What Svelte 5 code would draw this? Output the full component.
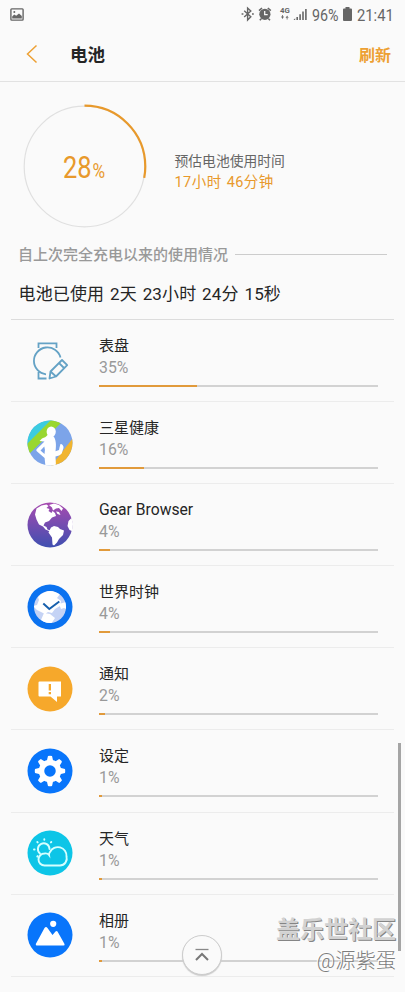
<script>
  const apps = [
    { icon: 'watch', name: '表盘', percent: 35 },
    { icon: 'health', name: '三星健康', percent: 16 },
    { icon: 'browser', name: 'Gear Browser', percent: 4 },
    { icon: 'clock', name: '世界时钟', percent: 4 },
    { icon: 'notice', name: '通知', percent: 2 },
    { icon: 'settings', name: '设定', percent: 1 },
    { icon: 'weather', name: '天气', percent: 1 },
    { icon: 'gallery', name: '相册', percent: 1 },
  ]

  const level = 28
  const teeth = [0, 45, 90, 135, 180, 225, 270, 315]
</script>

<div class="screen">
  <div class="status">
    <svg class="photo" width="14" height="13" viewBox="0 0 14 13">
      <rect x=".9" y=".9" width="12.2" height="11.2" rx=".8" fill="none" stroke="#666" stroke-width="1.4" />
      <path d="M2.200 10V8.500l2-2 2 1.300L9 5.500l2.800 2.500v2.500H2.200z" fill="#666" />
      <circle cx="4.300" cy="4" r="1" fill="#666" />
    </svg>
    <svg class="signals" width="68" height="16" viewBox="0 0 68 16">
      <g fill="none" stroke="#666" stroke-width="1.4">
        <path d="M3.2 4.8l6.6 6L6.6 14V2l3.200 3-6.600 6" />
        <path d="M.6 8h1.8M11 8h1.8" />
      </g>
      <circle cx="23.9" cy="8.3" r="5.6" fill="#666" />
      <path d="M18 4.600l3-2.600M29.800 4.600l-3-2.600M20.300 12.800l-1.500 1.500M27.500 12.800l1.500 1.500" stroke="#666" stroke-width="1.600" />
      <path d="M23.700 5v3.600h3" fill="none" stroke="#fafafa" stroke-width="1.300" />
      <text x="39" y="6.800">4G</text>
      <path d="M40 10.500h3L41.500 13zM44.600 12h3L46.100 9.500zM41.100 9h.8v2h-.8zM45.700 11.500h.8v2h-.8z" fill="#666" />
      <path d="M52.500 14h1.700v-1.700zM55.400 14v-3h1.600v3zM58.300 14V8.300h1.600V14zM61.200 14V5.600h1.600V14zM64.100 14V3h1.600v11z" fill="#666" />
    </svg>
    <span class="charge">96%</span>
    <svg class="cell" width="9" height="14" viewBox="0 0 9 14">
      <path d="M2.500 0h4v1.500H8q1 0 1 1V13q0 1-1 1H1q-1 0-1-1V2.500q0-1 1-1h1.500z" fill="#666" />
    </svg>
    <span class="time">21:41</span>
  </div>

  <header>
    <svg class="back" width="12" height="20" viewBox="0 0 12 20">
      <path d="M10.500 1.500L1.500 10l9 8.500" fill="none" stroke="#eda033" stroke-width="1.500" />
    </svg>
    <h1>电池</h1>
    <button type="button">刷新</button>
  </header>

  <section class="summary">
    <div class="gauge">
      <svg width="126" height="126" viewBox="0 0 126 126">
        <circle cx="63.500" cy="62.500" r="60.300" fill="none" stroke="#e0e0e0" stroke-width="1.200" />
        <circle
          cx="63.500" cy="62.500" r="60.800" fill="none" stroke="#e8992b" stroke-width="2.200"
          pathLength="100" stroke-dasharray="{level} 100" transform="rotate(-90 63.500 62.500)"
        />
      </svg>
      <div class="level"><b>{level}</b><small>%</small></div>
    </div>
    <div class="estimate">
      <p>预估电池使用时间</p>
      <strong>17小时 46分钟</strong>
    </div>
  </section>

  <h2><span>自上次完全充电以来的使用情况</span></h2>
  <p class="used">电池已使用 2天 23小时 24分 15秒</p>

  <ul>
    {#each apps as app}
      <li>
        <svg class="icon" width="46" height="46" viewBox="0 0 46 46">
          {#if app.icon === 'watch'}
            <g fill="none" stroke="#64a2c5" stroke-width="1.800">
              <path d="M11.500 10V5.300h18V10M33.500 19.500A13.500 13.500 0 1 0 19 36.300M11.500 34v6.500h8" />
              <path d="M22.500 40.500l1-7L35 22l5.200 5.200L29 38.500zM32 25l5 5M23.500 33.500L29 38.500" stroke-linejoin="round" />
            </g>
          {:else if app.icon === 'health'}
            <clipPath id="health-disc"><circle cx="23" cy="23" r="22.500" /></clipPath>
            <g clip-path="url(#health-disc)">
              <path d="M0 0h46v46H0z" fill="#7ca4e9" />
              <path d="M0 0h28L0 27z" fill="#3bcce0" />
              <path d="M25-1h10v3L2 34l-4-8z" fill="#99d730" />
              <path d="M46 18v28H24z" fill="#f1b52f" />
              <ellipse cx="24.200" cy="11.700" rx="4.600" ry="5.200" fill="#fff" />
              <path d="M20.500 15c-1.500 2-3 2.500-5.500 3.500l-2.500 2.500 5 .5L9.800 29c-.8 1-.5 1.800.3 2.500l7.500 6.500.8 8H29l-.5-9.500c2.500-.5 5-1.500 6.200-3l1.800-5.500c.4-2-1.500-4.200-3-4l-1 3.500-.5 2.500-3.500 1.300C29.500 25 29 18.500 26 16z" fill="#fff" />
              <path d="M17.300 26.500l-3.800 4 4 3.500q1-4-.2-7.500z" fill="#7ca4e9" />
            </g>
          {:else if app.icon === 'browser'}
            <linearGradient id="globe-fill" x1="0" y1="0" x2="0" y2="1">
              <stop offset="0" stop-color="#a84bb0" />
              <stop offset="1" stop-color="#3f4fb0" />
            </linearGradient>
            <circle cx="23" cy="23" r="22.500" fill="url(#globe-fill)" />
            <path d="M9.500 6.500l5-3 5-1 2 1.500-2 2 3 1-1 2 3 2 1-2 2.500 2 1 3-4 1.500-3 3.500-4 1.500-1.500 3 3 1.500 1 2.500 3 1-1 .8-4-1.800-2.500-3-4-2-2.500-5-1.500-5z" fill="#fff" />
            <path d="M22 3l5-1.500 5 1.500 4 3.500-1.500 2.500-2.500-3-3 .5-3 2-1-3zM29 9.500l3 .5 1.500 3-3-1zM24 25.500l3-1.500 4 1 2 2 4 1.500-1 4.500-4 4-2 3.500-3 3-1.500-1-.5-7-3.500-5zM44.500 16l-3 3-1 5 2 4 2.500 1 1-7z" fill="#fff" />
          {:else if app.icon === 'clock'}
            <circle cx="23" cy="23" r="22.500" fill="#0b72f0" />
            <clipPath id="clock-face"><circle cx="23" cy="23" r="16" /></clipPath>
            <g clip-path="url(#clock-face)">
              <path d="M7 7h32v32H7z" fill="#c5d3f5" />
              <path d="M14 10l9-4 10 4-3 4 4 3-1 5-5 3-3 4-4-1-3 2-8-4-4-4 4-1 2-5-1-3zM17 29l6 1 5 4-4 6h-7l-3-4zM32 20l7-2v7l-2-1-3 1z" fill="#fff" />
            </g>
            <path d="M16.300 19.500l6 5.500 10-7.500" fill="none" stroke="#1760ad" stroke-width="2" />
          {:else if app.icon === 'notice'}
            <circle cx="23" cy="23" r="22.500" fill="#f6a82b" />
            <path d="M12.500 15.500H34V30.500h-4V36l-6.500-5.500h-11q-1 0-1-1v-13q0-1 1-1z" fill="#fff" />
            <path d="M21.700 18h2.300v6.500h-2.300zM21.700 26h2.300v2.300h-2.300z" fill="#f6a82b" />
          {:else if app.icon === 'settings'}
            <circle cx="23" cy="23" r="22.500" fill="#0875fb" />
            {#each teeth as angle}
              <path d="M19.800 13l1.200-5q2-.5 4 0l1.200 5z" fill="#fff" transform="rotate({angle} 23 23)" />
            {/each}
            <circle cx="23" cy="23" r="8.500" fill="none" stroke="#fff" stroke-width="5.500" />
          {:else if app.icon === 'weather'}
            <circle cx="23" cy="23" r="22.500" fill="#0dc5e7" />
            <g fill="none" stroke="#d5ffff" stroke-width="1.900" stroke-linecap="round">
              <path d="M13 23.500a5.800 5.800 0 1 1 9.500-4.500" />
              <path d="M17.500 35.500h15.500a7 7 0 0 0 6.500-9 8.700 8.700 0 0 0-16.500-4.500q-1.200 1.500-1 3-1.500-2-4.500-1.500a6 6 0 0 0 0 12z" />
              <path d="M17.300 9.200v.6M10.300 12l.4.4M24.300 12l-.4.400M7 19.500h.6M10.300 26.500l.4-.4" />
            </g>
          {:else}
            <circle cx="23" cy="23" r="22.500" fill="#0875fb" />
            <path d="M8.800 32l8.700-16q1.500-2 3 0l5 7 3-3.500q1-1 2 0L37.500 32q.5 1.500-1 1.500H10q-1.500 0-1.200-1.500z" fill="#fff" />
            <circle cx="26.200" cy="11.800" r="3.100" fill="#fff" />
          {/if}
        </svg>
        <div class="detail">
          <span class="name" class:latin={app.icon === 'browser'}>{app.name}</span>
          <span class="percent">{app.percent}%</span>
          <div class="track"><div class="fill" style:width="{app.percent}%"></div></div>
        </div>
      </li>
    {/each}
  </ul>

  <button type="button" class="to-top" aria-label="Top">
    <svg width="16" height="14" viewBox="0 0 16 14">
      <path d="M1.500 1.500h13" stroke="#888" stroke-width="1.300" />
      <path d="M2 12l6-6 6 6" fill="none" stroke="#777" stroke-width="2" />
    </svg>
  </button>
  <div class="scrollbar"></div>
  <div class="watermark">
    <strong>盖乐世社区</strong>
    <span>@源紫蛋</span>
  </div>
</div>

<style>
  :global(body) {
    background: #fafafa;
  }

  .screen {
    position: relative;
    width: 405px;
    height: 992px;
    overflow: hidden;
    background: #fafafa;
    color: #252525;
    font-family: Roboto, 'Noto Sans CJK SC', sans-serif;
  }

  h1,
  h2,
  p,
  ul {
    margin: 0;
    padding: 0;
  }

  button {
    border: 0;
    padding: 0;
    background: none;
    font-family: inherit;
  }

  .status {
    display: flex;
    align-items: center;
    height: 28px;
    padding-left: 10px;
    color: #666;
    font-size: 17px;
    line-height: 28px;
  }

  .signals {
    margin-left: 217px;
    font-size: 7.8px;
    font-weight: 700;
  }

  .signals text {
    fill: #666;
  }

  .charge,
  .time {
    transform-origin: left;
    white-space: nowrap;
  }

  .charge {
    width: 27px;
    margin: 1px 0 0 3px;
    transform: scaleX(0.84);
  }

  .cell {
    margin: 0 5px 0 4px;
  }

  .time {
    margin-top: 1px;
    transform: scaleX(0.87);
  }

  header {
    box-sizing: border-box;
    display: flex;
    align-items: center;
    height: 54px;
    padding: 0 14px 2px 26px;
    border-bottom: 1px solid #e2e2e2;
  }

  h1 {
    margin-left: 32px;
    font-size: 17.5px;
    font-weight: 700;
  }

  header button {
    margin-left: auto;
    color: #eda033;
    font-size: 16px;
    font-weight: 700;
  }

  .summary {
    display: flex;
    height: 159px;
  }

  .gauge {
    display: grid;
    width: 126px;
    height: 126px;
    margin: 22px 0 0 21px;
  }

  .gauge > * {
    grid-area: 1 / 1;
  }

  .level {
    display: flex;
    align-items: baseline;
    align-self: center;
    margin-left: 41.5px;
    color: #e8992b;
    transform: scaleX(0.82);
    transform-origin: left;
  }

  .level b {
    font-size: 31px;
    font-weight: 400;
  }

  .level small {
    margin-left: 1px;
    font-size: 21px;
  }

  .estimate {
    margin: 69px 0 0 27.5px;
    color: #666;
    font-size: 13.8px;
    line-height: 21px;
  }

  .estimate strong {
    display: block;
    color: #e8992b;
    font-size: 14.5px;
    font-weight: 400;
    letter-spacing: 0.45px;
    word-spacing: 1px;
  }

  h2 {
    display: flex;
    align-items: center;
    gap: 7px;
    height: 26px;
    margin: 0 18px;
    color: #999;
    font-size: 15px;
    font-weight: 500;
    white-space: nowrap;
  }

  h2 span {
    margin-top: -1px;
  }

  h2::after {
    flex: 1;
    height: 1px;
    background: #ccc;
    content: '';
  }

  .used {
    height: 52px;
    padding-left: 18.5px;
    font-size: 17px;
    letter-spacing: 0.15px;
    line-height: 55px;
    word-spacing: 1.4px;
  }

  ul {
    margin: 0 11px;
    border-top: 1px solid #dcdcdc;
    list-style: none;
  }

  li {
    box-sizing: border-box;
    display: flex;
    height: 82.1px;
    padding: 0 16px 0 15.5px;
    border-bottom: 1px solid #ececec;
  }

  .icon {
    flex: none;
    margin-top: 17.5px;
  }

  .detail {
    flex: 1;
    margin: 15px 0 0 26.5px;
  }

  .name,
  .percent {
    display: block;
    height: 22px;
    font-size: 15px;
    line-height: 22px;
  }

  .latin {
    font-size: 15.7px;
  }

  .percent {
    color: #999;
    font-size: 15.8px;
    line-height: 21px;
  }

  .track {
    height: 2px;
    margin-top: 6px;
    background: #d2d2d2;
  }

  .fill {
    height: 2px;
    background: #e19a3b;
  }

  .to-top {
    position: absolute;
    left: 182px;
    bottom: 17px;
    display: grid;
    place-items: center;
    box-sizing: border-box;
    width: 40px;
    height: 40px;
    border: 1px solid #ccc;
    border-radius: 50%;
    background: #fafafa;
    box-shadow: 0 1px 1px #ccc;
  }

  .scrollbar {
    position: absolute;
    top: 743px;
    right: 4px;
    width: 3px;
    height: 208px;
    background: #a5a5a5;
  }

  .watermark {
    position: absolute;
    right: 9px;
    bottom: 16px;
    display: grid;
    justify-items: end;
    white-space: nowrap;
  }

  .watermark strong {
    height: 31px;
    color: #d2d2d2;
    font-size: 24px;
    line-height: 31px;
    text-shadow: 1px 1px #858585;
  }

  .watermark span {
    height: 30px;
    color: #7d7d7d;
    font-size: 20.3px;
    font-weight: 300;
    line-height: 30px;
    text-shadow: -1px -1px #fff;
  }
</style>
